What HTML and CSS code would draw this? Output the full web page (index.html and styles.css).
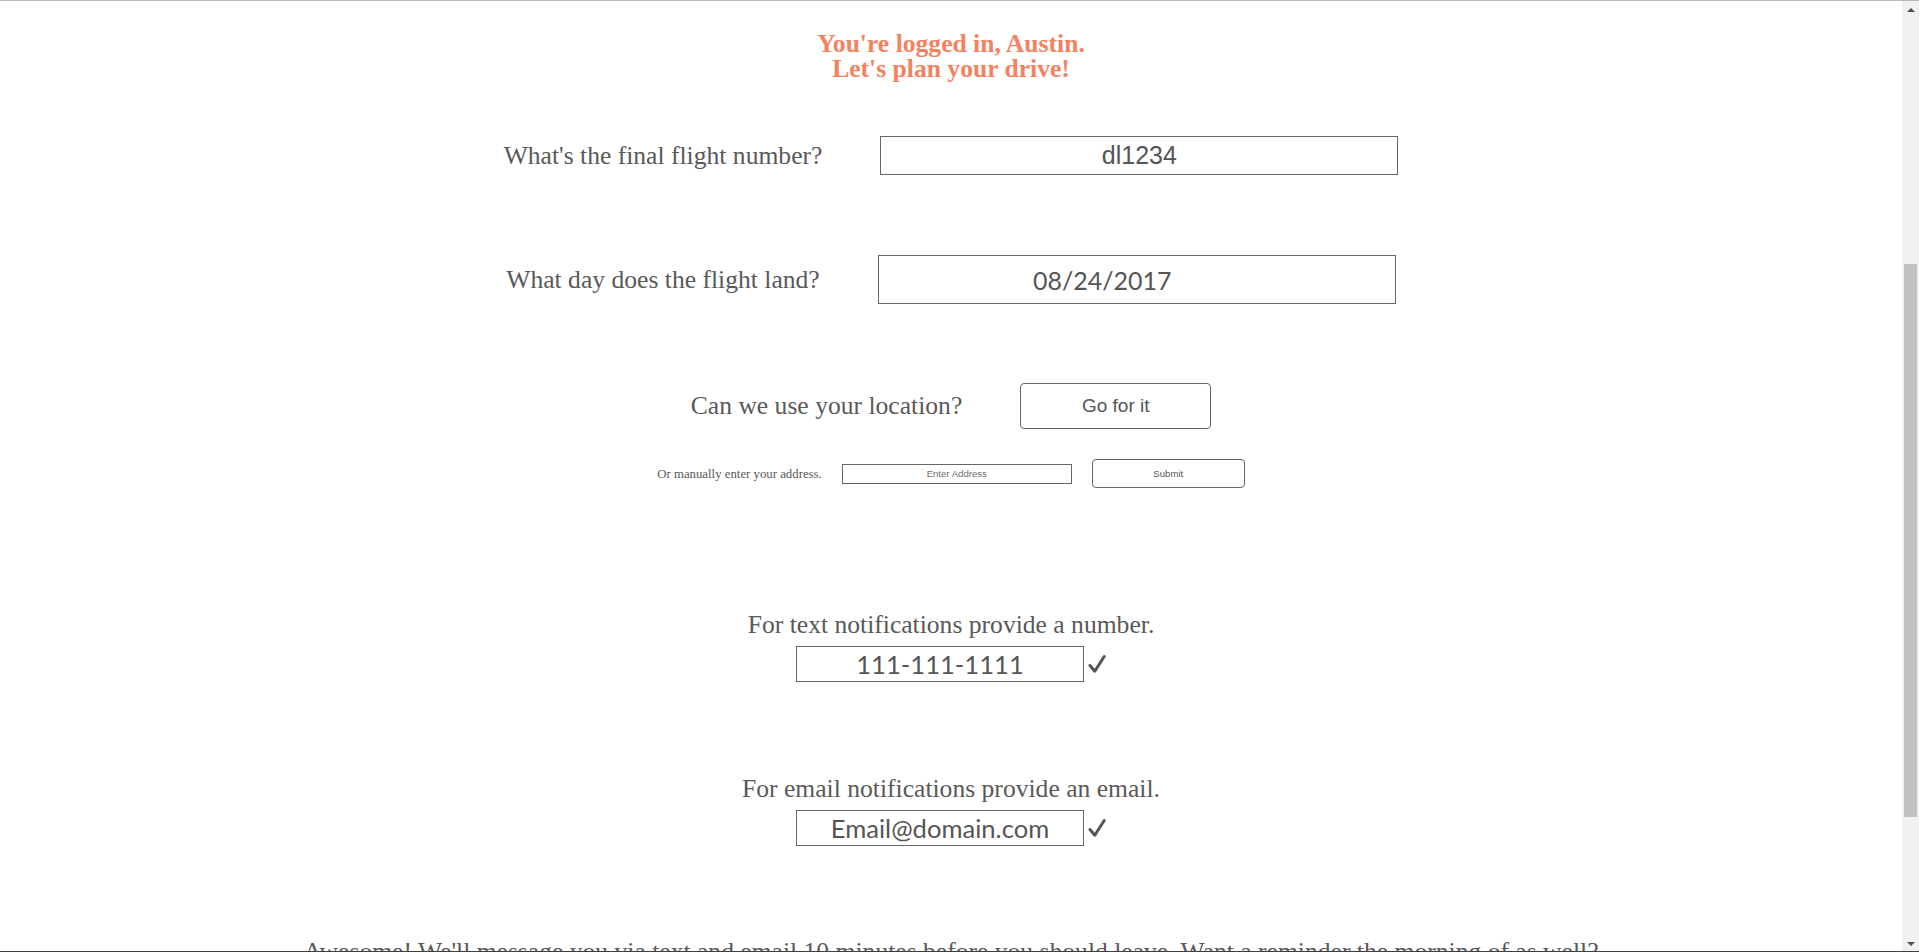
FILE: index.html
```html
<!DOCTYPE html>
<html lang="en">
<head>
<meta charset="utf-8">
<title>Plan your drive</title>
<link rel="stylesheet" href="styles.css">
</head>
<body>
<div class="window">
  <main class="page">
    <h1 class="title">You're logged in, Austin.<br>Let's plan your drive!</h1>

    <div class="row row-flight">
      <label class="label" for="flight">What's the final flight number?</label>
      <input class="field field-flight" id="flight" type="text" value="dl1234">
    </div>

    <div class="row row-date">
      <label class="label" for="day">What day does the flight land?</label>
      <input class="field field-date" id="day" type="text" value="08/24/2017">
    </div>

    <div class="row row-location">
      <span class="label">Can we use your location?</span>
      <button class="btn btn-go" type="button">Go for it</button>
    </div>

    <div class="row row-address">
      <label class="label-small" for="address">Or manually enter your address.</label>
      <input class="field field-address" id="address" type="text" placeholder="Enter Address">
      <button class="btn btn-submit" type="button">Submit</button>
    </div>

    <section class="notify notify-text">
      <label class="label notify-label" for="phone">For text notifications provide a number.</label>
      <div class="notify-row">
        <input class="field field-notify" id="phone" type="text" value="111-111-1111">
        <svg class="check" width="18" height="20" viewBox="0 0 18 20" aria-hidden="true"><path d="M2 11.5 L6.8 17.2 L16.2 2.5" fill="none" stroke="#555555" stroke-width="3" stroke-linecap="round" stroke-linejoin="round"/></svg>
      </div>
    </section>

    <section class="notify notify-email">
      <label class="label notify-label" for="email">For email notifications provide an email.</label>
      <div class="notify-row">
        <input class="field field-notify" id="email" type="text" value="Email@domain.com">
        <svg class="check" width="18" height="20" viewBox="0 0 18 20" aria-hidden="true"><path d="M2 11.5 L6.8 17.2 L16.2 2.5" fill="none" stroke="#555555" stroke-width="3" stroke-linecap="round" stroke-linejoin="round"/></svg>
      </div>
    </section>

    <p class="closing">Awesome! We'll message you via text and email 10 minutes before you should leave. Want a reminder the morning of as well?</p>
  </main>

  <div class="scrollbar" aria-hidden="true">
    <div class="scroll-btn"><span class="arrow arrow-up"></span></div>
    <div class="scroll-track"><div class="scroll-thumb"></div></div>
    <div class="scroll-btn"><span class="arrow arrow-down"></span></div>
  </div>
</div>
</body>
</html>
```

FILE: styles.css
```css
html, body {
  margin: 0;
  padding: 0;
  background: #ffffff;
}

body {
  font-family: "Liberation Serif", "Times New Roman", serif;
  color: #595959;
  border-top: 1px solid #b9b9b9;
}

body::after {
  content: "";
  position: fixed;
  left: 0;
  right: 0;
  bottom: 0;
  height: 1px;
  background: #3f3f3f;
}

.window {
  display: grid;
  grid-template-columns: 1fr 17px;
  align-items: start;
}

/* decorative browser scrollbar */
.scrollbar {
  position: sticky;
  top: 0;
  height: calc(100vh - 1px);
  display: flex;
  flex-direction: column;
  background: #f1f1f1;
}

.scroll-btn {
  height: 17px;
  display: flex;
  align-items: center;
  justify-content: center;
  flex: none;
}

.arrow {
  width: 0;
  height: 0;
  border-left: 4px solid transparent;
  border-right: 4px solid transparent;
}

.arrow-up { border-bottom: 4px solid #505050; }
.arrow-down { border-top: 4px solid #505050; }

.scroll-track {
  flex: 1;
  padding: 246px 2px 0;
}

.scroll-thumb {
  height: 553px;
  background: #c1c1c1;
}

.page {
  padding-top: 30px;
  padding-bottom: 500px;
  min-width: 0;
}

.title {
  margin: 0;
  font-size: 25.6px;
  line-height: 25px;
  font-weight: 700;
  color: #f4825f;
  text-align: center;
}

.row {
  display: flex;
  justify-content: center;
  align-items: center;
  gap: 58px;
}

.label {
  font-size: 25.6px;
  line-height: 30px;
  white-space: nowrap;
}

.label-small {
  font-size: 12.8px;
  line-height: 16px;
  white-space: nowrap;
}

.row-flight { margin-top: 55px; }
.row-date { margin-top: 80px; }
.row-location { margin-top: 79px; }
.row-address { margin-top: 30px; gap: 20px; }

.field {
  box-sizing: border-box;
  margin: 0;
  border: 1px solid #666666;
  border-radius: 0;
  background: #ffffff;
  color: #555555;
  text-align: center;
  outline: none;
}

.field-flight {
  width: 518px;
  height: 39px;
  padding: 0;
  font-family: "Liberation Sans", Arial, sans-serif;
  font-size: 25px;
}

.field-date {
  width: 518px;
  height: 49px;
  padding: 0 69px 0 0;
  font-family: Lato, "Liberation Sans", sans-serif;
  font-size: 25px;
}

.field-address {
  width: 230px;
  height: 20px;
  padding: 0;
  font-family: "Liberation Sans", Arial, sans-serif;
  font-size: 9.6px;
}

.field-address::placeholder {
  color: #6e6e6e;
}

.btn {
  box-sizing: border-box;
  margin: 0;
  background: #ffffff;
  border: 1px solid #666666;
  border-radius: 4px;
  color: #555555;
  font-family: "Liberation Sans", Arial, sans-serif;
  padding: 0;
}

.btn-go {
  width: 191px;
  height: 46px;
  font-size: 19px;
}

.btn-submit {
  width: 153px;
  height: 29px;
  font-size: 9.6px;
}

.notify {
  display: flex;
  flex-direction: column;
  align-items: center;
  gap: 6px;
}

.notify-text { margin-top: 122px; }
.notify-email { margin-top: 92px; }

.notify-row {
  display: flex;
  align-items: center;
  gap: 4px;
}

.field-notify {
  width: 288px;
  height: 36px;
  padding: 0;
  font-family: Lato, "Liberation Sans", sans-serif;
  font-size: 25.6px;
}

.check {
  display: block;
  flex: none;
}

.closing {
  margin: 91px 0 0;
  font-size: 25.6px;
  line-height: 30px;
  text-align: center;
}
```
